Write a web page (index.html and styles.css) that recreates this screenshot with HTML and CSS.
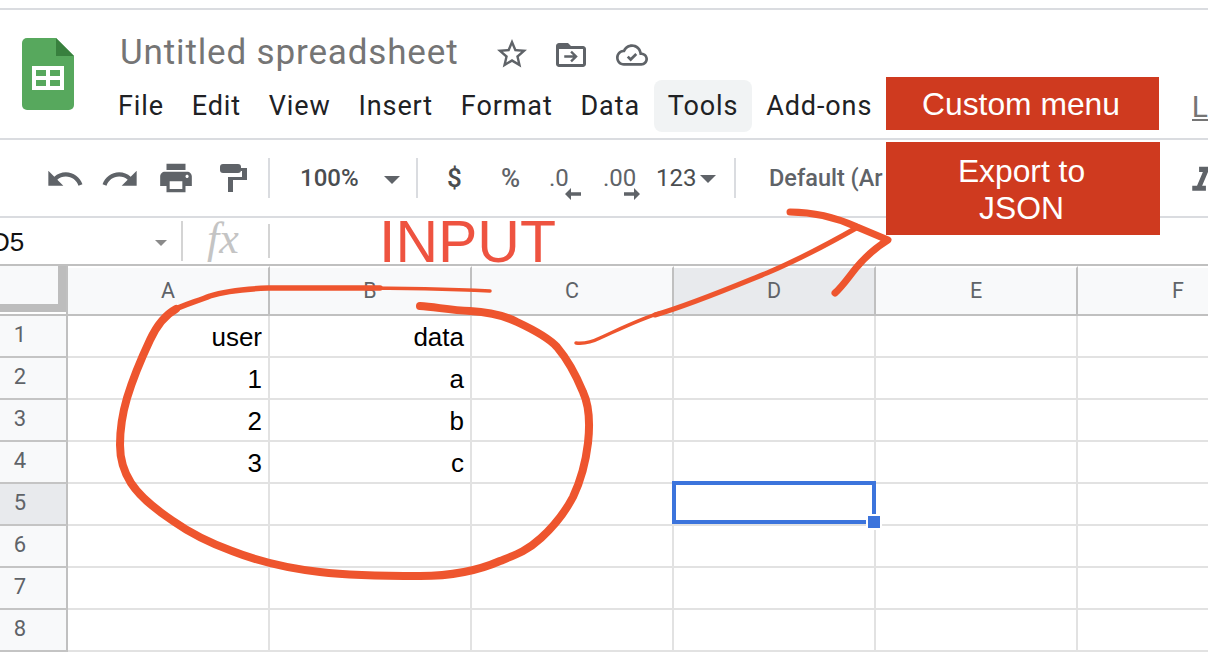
FILE: index.html
```html
<!DOCTYPE html>
<html lang="en">
<head>
<meta charset="utf-8">
<title>Untitled spreadsheet</title>
<link rel="stylesheet" href="styles.css">
</head>
<body>
<div class="page">
  <header class="header">
    <svg class="logo" viewBox="0 0 52 72" aria-hidden="true">
      <path class="logo-body" d="M5 0H34L52 18V67a5 5 0 0 1-5 5H5a5 5 0 0 1-5-5V5a5 5 0 0 1 5-5z"/>
      <path class="logo-fold" d="M34 0L52 18H34z"/>
      <path class="logo-table" fill-rule="evenodd" d="M10 28h32v24H10zM14 32v6h10v-6zM28 32v6h10v-6zM14 42v6h10v-6zM28 42v6h10v-6z"/>
    </svg>
    <div class="head-main">
      <div class="title-row">
        <div class="title">Untitled spreadsheet</div>
        <svg class="icon i-star" viewBox="0 0 24 24"><path d="M22 9.24l-7.19-.62L12 2 9.19 8.63 2 9.24l5.46 4.73L5.82 21 12 17.27 18.18 21l-1.63-7.03L22 9.24zM12 15.4l-3.76 2.27 1-4.28-3.32-2.88 4.38-.38L12 6.1l1.71 4.04 4.38.38-3.32 2.88 1 4.28L12 15.4z"/></svg>
        <svg class="icon i-folder" viewBox="0 0 24 24"><path d="M20 6h-8l-2-2H4c-1.1 0-2 .9-2 2v12c0 1.1.9 2 2 2h16c1.1 0 2-.9 2-2V8c0-1.1-.9-2-2-2zm0 12H4V8h16v10z"/><path d="M12.6 9.2l-1.1 1.1 1.9 1.8H7.5v1.8h5.9l-1.9 1.8 1.1 1.1 3.9-3.8z"/></svg>
        <svg class="icon i-cloud" viewBox="0 0 24 24"><path d="M19.35 10.04C18.67 6.59 15.64 4 12 4 9.11 4 6.6 5.64 5.35 8.04 2.34 8.36 0 10.91 0 14c0 3.31 2.69 6 6 6h13c2.76 0 5-2.24 5-5 0-2.64-2.05-4.78-4.65-4.96zM19 18H6c-2.21 0-4-1.79-4-4 0-2.05 1.53-3.76 3.56-3.97l1.07-.11.5-.95C8.08 7.14 9.94 6 12 6c2.62 0 4.88 1.86 5.39 4.43l.3 1.5 1.53.11c1.56.1 2.78 1.41 2.78 2.96 0 1.65-1.35 3-3 3z"/><path class="check" d="M8.8 13.2l2.2 2.2 4.2-4.2"/></svg>
      </div>
      <nav class="menu">
        <span class="menu-item">File</span>
        <span class="menu-item">Edit</span>
        <span class="menu-item">View</span>
        <span class="menu-item">Insert</span>
        <span class="menu-item">Format</span>
        <span class="menu-item">Data</span>
        <span class="menu-item is-active">Tools</span>
        <span class="menu-item">Add-ons</span>
        <span class="last-edit">L</span>
      </nav>
    </div>
  </header>

  <div class="toolbar">
    <svg class="icon t-undo" viewBox="0 0 24 24"><path d="M12.5 8c-2.65 0-5.05.99-6.9 2.6L2 7v9h9l-3.62-3.62c1.39-1.16 3.16-1.88 5.12-1.88 3.54 0 6.55 2.31 7.6 5.5l2.37-.78C21.08 11.03 17.15 8 12.5 8z"/></svg>
    <svg class="icon t-redo" viewBox="0 0 24 24"><path d="M18.4 10.6C16.55 8.99 14.15 8 11.5 8c-4.65 0-8.58 3.03-9.96 7.22L3.9 16c1.05-3.19 4.05-5.5 7.6-5.5 1.95 0 3.73.72 5.12 1.88L13 16h9V7l-3.6 3.6z"/></svg>
    <svg class="icon t-print" viewBox="0 0 24 24"><path d="M19 8H5c-1.66 0-3 1.34-3 3v6h4v4h12v-4h4v-6c0-1.66-1.34-3-3-3zm-3 11H8v-5h8v5zm3-7c-.55 0-1-.45-1-1s.45-1 1-1 1 .45 1 1-.45 1-1 1zm-1-9H6v4h12V3z"/></svg>
    <svg class="icon t-paint" viewBox="0 0 27 28"><path d="M3 0h15a3 3 0 0 1 3 3v3a3 3 0 0 1-3 3H3a3 3 0 0 1-3-3V3a3 3 0 0 1 3-3z"/><path d="M21 4h6v12H13v12H8V13h14V7h-1z"/></svg>
    <span class="sep s-1"></span>
    <span class="tool-text t-zoom">100%</span>
    <span class="caret c-zoom"></span>
    <span class="sep s-2"></span>
    <span class="tool-text t-dollar">$</span>
    <span class="tool-text t-pct">%</span>
    <span class="tool-text t-dec1">.0<svg class="dec-arrow" viewBox="0 0 16 12"><path d="M6 0v4.2h10v3.6H6V12L0 6z"/></svg></span>
    <span class="tool-text t-dec2">.00<svg class="dec-arrow" viewBox="0 0 16 12"><path d="M10 0v4.2H0v3.6h10V12l6-6z"/></svg></span>
    <span class="tool-text t-num">123</span>
    <span class="caret c-num"></span>
    <span class="sep s-3"></span>
    <span class="tool-text t-font">Default (Ar</span>
    <svg class="icon t-italic" viewBox="0 0 24 24"><path d="M10 4v3h2.21l-3.42 8H6v3h8v-3h-2.21l3.42-8H18V4z"/></svg>
  </div>

  <div class="formula">
    <span class="cell-ref">D5</span>
    <span class="caret c-ref"></span>
    <span class="sep s-4"></span>
    <span class="fx">fx</span>
    <span class="sep s-5"></span>
  </div>

  <div class="sheet">
    <div class="corner"><div class="corner-box"></div></div>
    <div class="col-head">A</div>
    <div class="col-head">B</div>
    <div class="col-head">C</div>
    <div class="col-head is-selected">D</div>
    <div class="col-head">E</div>
    <div class="col-head">F</div>

    <div class="row-head">1</div>
    <div class="cell">user</div><div class="cell">data</div><div class="cell"></div><div class="cell"></div><div class="cell"></div><div class="cell"></div>
    <div class="row-head">2</div>
    <div class="cell">1</div><div class="cell">a</div><div class="cell"></div><div class="cell"></div><div class="cell"></div><div class="cell"></div>
    <div class="row-head">3</div>
    <div class="cell">2</div><div class="cell">b</div><div class="cell"></div><div class="cell"></div><div class="cell"></div><div class="cell"></div>
    <div class="row-head">4</div>
    <div class="cell">3</div><div class="cell">c</div><div class="cell"></div><div class="cell"></div><div class="cell"></div><div class="cell"></div>
    <div class="row-head is-selected">5</div>
    <div class="cell"></div><div class="cell"></div><div class="cell"></div><div class="cell active"><div class="selection"><div class="handle"></div></div></div><div class="cell"></div><div class="cell"></div>
    <div class="row-head">6</div>
    <div class="cell"></div><div class="cell"></div><div class="cell"></div><div class="cell"></div><div class="cell"></div><div class="cell"></div>
    <div class="row-head">7</div>
    <div class="cell"></div><div class="cell"></div><div class="cell"></div><div class="cell"></div><div class="cell"></div><div class="cell"></div>
    <div class="row-head">8</div>
    <div class="cell"></div><div class="cell"></div><div class="cell"></div><div class="cell"></div><div class="cell"></div><div class="cell"></div>
  </div>

  <div class="annot-input">INPUT</div>
  <svg class="ink" viewBox="0 0 1208 654" aria-hidden="true">
    <path class="ink-thin" d="M490 291C450 289 400 288 350 288"/>
    <path class="ink-mid" d="M380 288C340 288 300 288 268 288C245 289 225 291 210 296C195 302 180 306 170 312"/>
    <path class="ink-thick" d="M176 309C165 315 157 325 150 340C142 357 134 375 127 398C122 415 120 430 120 445C120 460 124 472 131 483C140 497 155 509 173 521C190 533 210 543 232 551C255 560 285 568 320 572C345 575 380 576 420 576C450 576 475 572 500 561C515 555 527 551 541 538C552 528 564 514 573 497C581 480 586 460 588 443C590 425 589 405 583 392C576 375 568 360 557 347C548 337 532 329 517 322C505 316 490 312 470 311C450 310 435 307 420 306"/>
    <path class="ink-arrow-a" d="M576 343C585 344 592 342 600 338C620 329 640 319 660 313"/>
    <path class="ink-arrow-b" d="M655 315C690 305 730 288 767 273C800 259 830 243 858 227"/>
    <path class="ink-arrow-c" d="M790 212C810 212 835 217 857 227L888 240C875 248 866 256 856 268C848 278 842 287 835 293"/>
  </svg>
  <div class="box box-menu">Custom menu</div>
  <div class="box box-export">Export to<br>JSON</div>
</div>
</body>
</html>
```
FILE: styles.css
```css
* { box-sizing: border-box; }
html, body { margin: 0; padding: 0; background: #fff; }
.page {
  position: relative;
  width: 1208px;
  height: 654px;
  overflow: hidden;
  padding-top: 8px;
  font-family: Roboto, "Liberation Sans", sans-serif;
  background: #fff;
}
.icon { display: block; flex: none; fill: #5f6368; }

/* header */
.header {
  display: flex;
  height: 132px;
  border-top: 2px solid #dadce0;
  border-bottom: 2px solid #dadce0;
}
.logo { flex: none; width: 52px; height: 72px; margin: 28px 0 0 22px; }
.logo-body { fill: #57a85d; }
.logo-fold { fill: #38803e; }
.logo-table { fill: #fff; }
.head-main { flex: 1; min-width: 0; margin-left: 30px; padding-top: 19px; }
.title-row { display: flex; align-items: center; height: 45px; }
.title {
  flex: none;
  width: 390px;
  padding: 2px 0 0 16px;
  font-size: 35px;
  line-height: 45px;
  letter-spacing: .85px;
  color: #757575;
  white-space: nowrap;
}
.i-star { width: 36px; height: 36px; margin-top: 5px; }
.i-folder { width: 36px; height: 36px; margin: 6px 0 0 23px; }
.i-cloud { width: 32px; height: 32px; margin: 6px 0 0 27px; }
.check { fill: none; stroke: #5f6368; stroke-width: 2; }
.menu { display: flex; height: 52px; margin-top: 6px; }
.menu-item {
  padding: 1px 13.9px 0;
  font-size: 27px;
  line-height: 51px;
  letter-spacing: .9px;
  color: #202124;
  border-radius: 8px;
  white-space: nowrap;
}
.is-active { background: #f1f3f4; }
.last-edit {
  align-self: flex-start;
  margin: 14px 0 0 auto;
  font-size: 30px;
  line-height: 25px;
  color: #757575;
  border-bottom: 2px solid #757575;
}

/* toolbar */
.toolbar {
  display: flex;
  align-items: center;
  height: 78px;
  border-bottom: 2px solid #dadce0;
  white-space: nowrap;
}
.t-undo { width: 40px; height: 40px; margin: 2px 0 0 45px; }
.t-redo { width: 40px; height: 40px; margin: 2px 0 0 15px; }
.t-print { width: 38px; height: 38px; margin: 0 0 0 17px; }
.t-paint { width: 27px; height: 28px; margin: 0 0 0 25px; }
.t-italic { width: 41px; height: 41px; margin: 5px 0 0 295px; }
.sep { flex: none; display: block; width: 2px; background: #dadce0; }
.toolbar .sep { height: 40px; }
.s-1 { margin-left: 21px; }
.s-2 { margin-left: 16px; }
.s-3 { margin-left: 18px; }
.tool-text {
  position: relative;
  flex: none;
  font-size: 24px;
  line-height: 40px;
  color: #5f6368;
}
.t-zoom { width: 58px; margin-left: 30px; font-weight: 500; color: #4a4d50; }
.t-dollar { width: 15px; margin-left: 29px; font-size: 26px; font-weight: 500; color: #4a4d50; }
.t-pct { width: 20px; margin-left: 39px; font-size: 26px; font-weight: 500; }
.t-dec1 { width: 30px; margin-left: 28px; }
.t-dec2 { width: 38px; margin-left: 24px; }
.t-num { width: 40px; margin-left: 15px; color: #4a4d50; }
.t-font { width: 118px; margin-left: 33px; font-size: 23.5px; font-weight: 500; }
.dec-arrow { position: absolute; top: 30px; width: 16px; height: 12px; fill: #5f6368; }
.t-dec1 .dec-arrow { left: 16px; }
.t-dec2 .dec-arrow { left: 21px; }
.caret {
  flex: none;
  display: block;
  width: 0;
  height: 0;
  border-style: solid;
  border-width: 8px 8px 0;
  border-color: #5f6368 transparent transparent;
}
.c-zoom { margin: 4px 0 0 26px; }
.c-num { margin: 2px 0 0 4px; }

/* formula bar */
.formula { display: flex; align-items: center; height: 46px; white-space: nowrap; }
.cell-ref {
  flex: none;
  width: 154px;
  margin-left: -9px;
  padding-top: 2px;
  font: 26px/40px "Liberation Sans", sans-serif;
  color: #111;
}
.c-ref { border-width: 6px 6px 0; border-top-color: #8a8a8a; margin: 3px 0 0 10px; }
.formula .sep { background: #d4d4d4; }
.s-4 { height: 40px; margin-left: 14px; }
.s-5 { height: 34px; margin-left: 27px; }
.fx {
  flex: none;
  width: 34px;
  margin: 0 0 5px 24px;
  font: italic 44px/40px "Liberation Serif", serif;
  color: #c4c4c4;
}

/* sheet */
.sheet {
  display: grid;
  grid-template-columns: 68px repeat(6, 202px);
  grid-template-rows: 50px;
  grid-auto-rows: 42px;
  border-top: 2px solid #c0c0c0;
  font-family: "Liberation Sans", sans-serif;
}
.corner { background: #fff; border-bottom: 2px solid #c0c0c0; border-right: 2px solid #c0c0c0; }
.corner-box {
  width: 66px;
  height: 46px;
  background: #f8f9fa;
  border-right: 8px solid #bdbdbd;
  border-bottom: 8px solid #bdbdbd;
}
.col-head {
  background: #f8f9fa;
  border-top: 2px solid #fff;
  border-right: 2px solid #c0c0c0;
  border-bottom: 2px solid #c0c0c0;
  font: 21.5px/46px Roboto, sans-serif;
  text-align: center;
  color: #5f6368;
}
.col-head.is-selected, .row-head.is-selected { background: #e8eaed; }
.row-head {
  padding-right: 26px;
  background: #f8f9fa;
  border-right: 2px solid #c0c0c0;
  border-bottom: 2px solid #c4c4c4;
  font: 22px/37px Roboto, sans-serif;
  text-align: center;
  color: #5f6368;
}
.cell {
  padding-right: 6px;
  border-right: 2px solid #e2e2e2;
  border-bottom: 2px solid #e2e2e2;
  font-size: 26px;
  line-height: 42px;
  text-align: right;
  color: #000;
}
.active { position: relative; }
.selection {
  position: absolute;
  top: -3px;
  left: -2px;
  width: 204px;
  height: 43px;
  border: 4px solid #3c74dc;
}
.handle {
  position: absolute;
  right: -8px;
  bottom: -8px;
  width: 12px;
  height: 12px;
  background: #3c74dc;
  outline: 2px solid #fff;
}

/* annotations */
.annot-input {
  position: absolute;
  left: 379px;
  top: 212px;
  font: 59px/60px "Liberation Sans", sans-serif;
  color: #ee5340;
}
.ink { position: absolute; left: 0; top: 0; width: 1208px; height: 654px; fill: none; stroke: #ee552e; stroke-linecap: round; stroke-linejoin: round; }
.ink-thin { stroke-width: 3.5; }
.ink-mid { stroke-width: 5.5; }
.ink-thick { stroke-width: 8; }
.ink-arrow-a { stroke-width: 3.5; }
.ink-arrow-b { stroke-width: 5; }
.ink-arrow-c { stroke-width: 7; }
.box {
  position: absolute;
  left: 886px;
  display: flex;
  align-items: center;
  justify-content: center;
  padding: 2px 3px 0 0;
  background: #cf3a1f;
  color: #fff;
  font: 31.8px/37px "Liberation Sans", sans-serif;
  text-align: center;
}
.box-menu { top: 77px; width: 273px; height: 53px; }
.box-export { top: 142px; width: 274px; height: 93px; }
```
